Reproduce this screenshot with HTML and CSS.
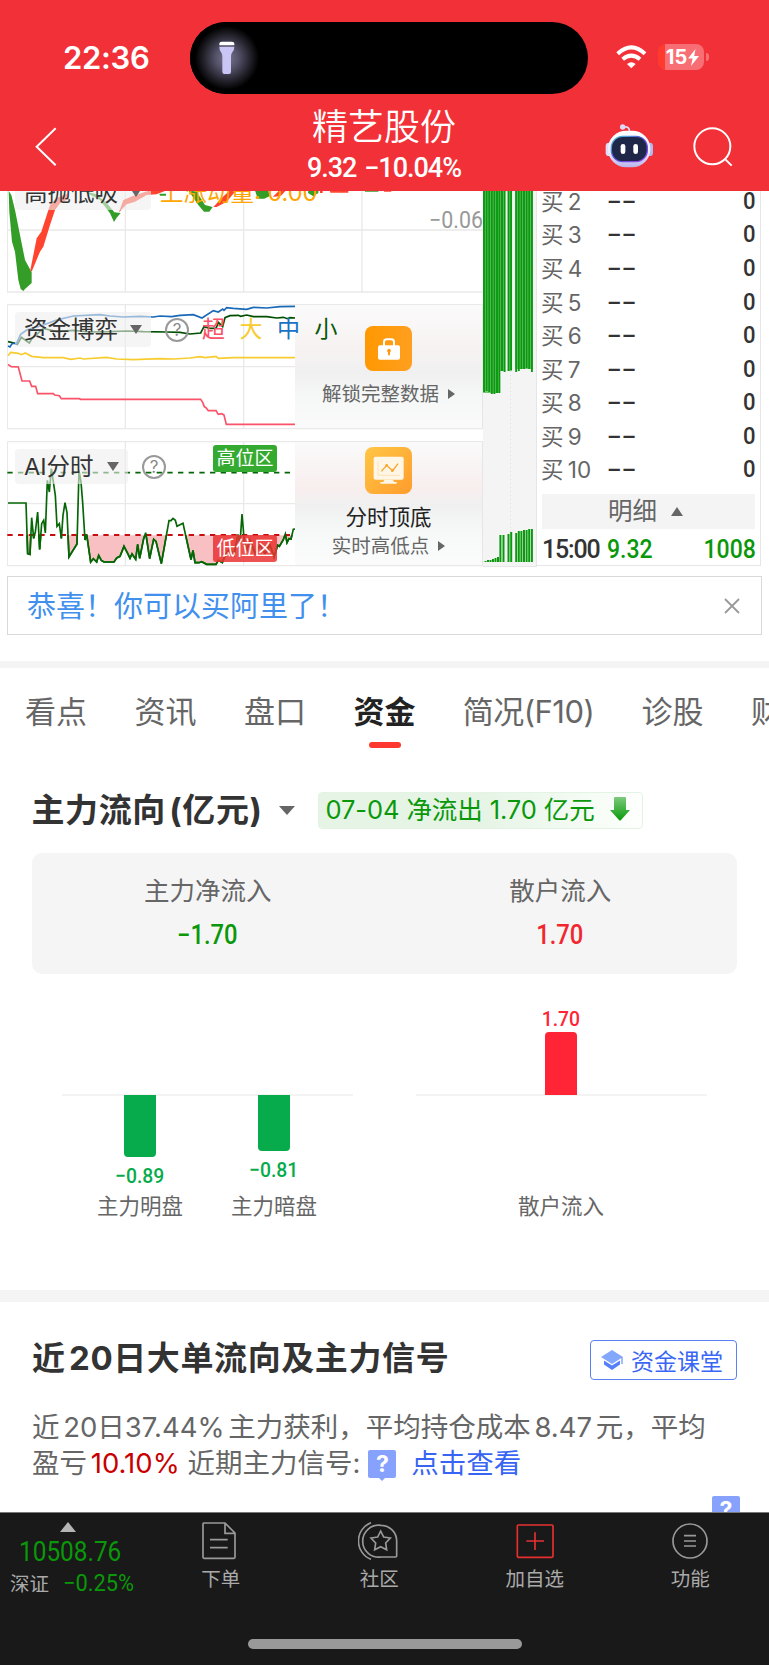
FILE: index.html
```html
<!DOCTYPE html>
<html lang="zh-CN">
<head>
    <meta charset="UTF-8">
    <meta name="viewport" content="width=device-width, initial-scale=1.0">
    <title>精艺股份</title>
    <link rel="stylesheet" href="styles.css">
</head>
<body>
    <header class="header">
        <div class="status-bar">
            <span class="clock">22:36</span>
            <div class="island">
                <div class="torch-glow">
                    <svg width="16" height="34" viewBox="656 124 48 102">
                        <path d="M657 137v-4q0-7 8-7h29q8 0 8 7v4z" fill="#fff"/>
                        <path d="M657 141h45q0 10-6 17q-4 5-4 12v46q0 7-6 7h-14q-6 0-6-7v-46q0-7-4-12q-5-7-5-17z" fill="#c9c6f6"/>
                    </svg>
                </div>
            </div>
            <div class="status-icons">
                <svg width="31" height="24" viewBox="708 136 93 72" fill="none" stroke="#fff" stroke-width="12">
                    <path d="M713 162q41-38 82 0"/>
                    <path d="M728 179q26-22 52 0"/>
                    <path d="M754 206l-13-13q13-11 26 0z" fill="#fff" stroke="none"/>
                </svg>
                <span class="battery">15<svg width="11" height="17" viewBox="0 0 11 17"><path d="M7.5 0L0 9.5h4.6L3 17L11 7H6.2z" fill="#fff"/></svg></span>
                <i class="battery-tip"></i>
            </div>
        </div>
        <div class="nav-bar">
            <svg class="back" width="22" height="40" viewBox="106 382 66 120" fill="none" stroke="#fff" stroke-width="6"><path d="M168 386l-57 55l57 56"/></svg>
            <div class="stock">
                <h1>精艺股份</h1>
                <p>9.32 −10.04%</p>
            </div>
            <svg class="robot" width="48" height="44" viewBox="675 373 144 132">
                <defs>
                    <linearGradient id="shell" x2="0" y2="1"><stop offset="0" stop-color="#fff"/><stop offset=".6" stop-color="#eceafd"/><stop offset="1" stop-color="#b9b4ec"/></linearGradient>
                    <linearGradient id="rim" x2="1" y2="1"><stop offset="0" stop-color="#4fd5e0"/><stop offset=".5" stop-color="#5546d8"/><stop offset="1" stop-color="#9b4df0"/></linearGradient>
                </defs>
                <path d="M732 382q18-2 16 14" fill="none" stroke="#dcdaf6" stroke-width="5"/>
                <circle cx="728" cy="382" r="8" fill="#dcdaf6"/>
                <rect x="677" y="429" width="20" height="40" rx="10" fill="#dedcf8"/>
                <rect x="799" y="429" width="20" height="40" rx="10" fill="#b5b8ee"/>
                <rect x="684" y="393" width="127" height="110" rx="54" fill="url(#shell)"/>
                <rect x="694" y="410" width="108" height="76" rx="34" fill="#1f2748" stroke="url(#rim)" stroke-width="4"/>
                <rect x="722" y="433" width="14" height="30" rx="7" fill="#fff"/>
                <rect x="760" y="433" width="14" height="30" rx="7" fill="#fff"/>
            </svg>
            <svg class="search" width="40" height="40" viewBox="939 381 120 120" fill="none" stroke="#fff" stroke-width="6"><circle cx="997" cy="439" r="54"/><path d="M1036 478l19 19"/></svg>
        </div>
    </header>

    <section class="market">
        <div class="charts">
            <div class="panel panel-momentum">
                <svg width="477" height="102" viewBox="21 18 1431 306">
                    <path class="grid" d="M22 0V321H1449M376 0V321M731 0V321M1086 0V321M22 135H1449"/>
                    <path fill="#339d27" d="M26 18L34 30L45 75L60 150L75 225L95 262V294L75 312L70 318L62 312L55 285L45 200L36 170L28 80z"/>
                    <path fill="#ff4530" d="M91 255L110 160L124 140L150 60L168 40L205 25V42L180 55L165 75L150 120L130 185L120 200L95 260z"/>
                    <path fill="#339d27" d="M250 18L290 28L325 60L343 82L362 84L350 98L342 111L330 85L300 45z"/>
                    <path fill="#ff4530" d="M357 82L370 45L400 32L450 16H500L470 28L440 30L405 50L380 58z"/>
                    <path fill="#339d27" d="M478 26h20v6h-18zM565 16L590 20L615 60L638 66L628 80L612 80L595 60z"/>
                    <path fill="#ff4530" d="M640 66L668 36L690 16L705 20L680 50L650 66z"/>
                    <path fill="#339d27" d="M765 16h40l3 18l-15 7h-20z"/>
                    <path fill="#ff4530" d="M818 36l20-20h20l-15 16zM960 18h8v6h-8zM990 18h55v5h-54zM1152 18h22v2h-22z"/>
                    <path fill="#339d27" d="M925 16h30v8l-15 10l-16-10zM1095 16h40v4h-40z"/>
                </svg>
                <div class="pill">高抛低吸<i class="caret"></i></div>
                <span class="momentum">上涨动量: 0.00</span>
                <span class="scale">−0.06</span>
            </div>

            <div class="panel panel-funds">
                <svg width="477" height="126" viewBox="21 357 1431 378" fill="none" stroke-width="5">
                    <path class="grid" d="M22 359H1449M22 731H1449M22 359V731M376 359V731M731 359V731M22 545H886"/>
                    <path stroke="#004f00" d="M24 470L42 474L52 478L64 457L88 474L95 462L130 430L170 440L220 436L270 441L330 440L380 438L430 440L500 441L540 442L570 447L602 444L612 425L630 430L648 430L655 412L668 425L675 398L690 392L715 391L722 394L740 390L760 395L800 395L830 399L850 397L862 401L870 398L886 399"/>
                    <path stroke="#1869b8" d="M24 483L30 486L36 476L50 474L62 448L80 435L130 420L170 405L220 393L300 389L330 393L370 396L420 394L460 396L480 393L515 395L540 391L580 389L606 399L640 377L655 381L668 372L672 376L680 368L700 370L740 373L760 367L800 369L840 365L886 364"/>
                    <path stroke="#f7cc2e" d="M24 512L32 502L55 505L64 509L76 504L95 514L130 518L190 518L212 523L240 519L250 522L320 517L350 522L400 524L480 521L520 522L570 519L600 515L615 518L648 514L655 520L700 518L886 518"/>
                    <path stroke="#fa5268" d="M24 538L34 545L55 546L66 588H89L95 604H107L113 626H160L164 630L178 632L184 641H238L242 643H602L608 652L613 665L618 668L625 677H648L655 688L665 686L672 690L679 718H886"/>
                </svg>
                <div class="pill">资金博弈<i class="caret"></i></div>
                <div class="help">?</div>
                <div class="locked">
                    <span class="lock-icon">
                        <svg width="24" height="22" viewBox="292 460 70 66"><path d="M312 487v-15q0-8 8-8h14q8 0 8 8v15" fill="none" stroke="#fff" stroke-width="6"/><rect x="294" y="482" width="66" height="43" rx="6" fill="#fff"/><path d="M327 492a6 6 0 0 1 3 11v9h-6v-9a6 6 0 0 1 3-11z" fill="#ff9a0e"/></svg>
                    </span>
                    <p class="unlock">解锁完整数据<i class="arrow"></i></p>
                </div>
                <div class="legend"><span class="c-red">超</span><span class="c-yellow">大</span><span class="c-blue">中</span><span class="c-green">小</span></div>
            </div>

            <div class="panel panel-ai">
                <svg width="477" height="126" viewBox="21 47 1431 378" fill="none" stroke-width="5">
                    <clipPath id="low"><rect x="21" y="330" width="866" height="92"/></clipPath>
                    <path class="grid" d="M22 49H1449M22 421H1449M22 49V421M376 49V421M731 49V421M22 235H886"/>
                    <g clip-path="url(#low)"><use href="#ai-line" fill="#f9c0c3"/></g>
                    <path stroke="#056605" stroke-dasharray="16 16" d="M22 142H886"/>
                    <path stroke="#c80d10" stroke-width="6" stroke-dasharray="16 16" d="M22 329H886"/>
                    <path id="ai-line" stroke="#056605" d="M24 233H78L83 385L90 387L95 277L101 339L106 320L113 260L119 372L125 295L131 285L136 323L142 165L148 200L154 130L166 210L171 303L178 295L184 339L189 270L195 232L201 262L207 395L213 385L231 356L237 136L243 170L248 232L255 344L260 327L272 410L280 400L290 410L296 390L304 405L312 410H342L350 398L360 393L372 363L383 384L390 399L396 386L407 402L413 357L419 399L431 340L437 322L449 400L455 370L461 342L468 348L484 415L507 286L513 286L519 279L526 285L531 303L549 294L573 403L579 375L585 412L597 412L605 409L620 417H648L655 405L667 412L678 385L690 370L702 390L714 327L720 355L726 266L733 350L740 375L750 345L766 385L780 360L795 385L810 360L822 395L833 360L838 363L850 343L856 326L861 352L867 340L873 341L880 312L886 311"/>
                </svg>
                <div class="pill pill-ai">AI分时<i class="caret"></i></div>
                <div class="help help-ai">?</div>
                <span class="zone zone-high">高位区</span>
                <span class="zone zone-low">低位区</span>
                <div class="locked">
                    <span class="lock-icon screen-icon">
                        <svg width="32" height="30" viewBox="280 97 96 90"><rect x="282" y="99" width="90" height="69" rx="6" fill="#fff6e6"/><path d="M314 168h26l3 7h8v5h-49v-5h9z" fill="#fff6e6"/><path d="M295 112v43h66" fill="none" stroke="#fbd9a0" stroke-width="2"/><path d="M305 143l16-18l18 16l16-21" fill="none" stroke="#f9a62c" stroke-width="4"/><circle cx="321" cy="125" r="4" fill="#f9a62c"/><circle cx="338" cy="141" r="4" fill="#f9a62c"/></svg>
                    </span>
                    <p class="lock-title">分时顶底</p>
                    <p class="lock-sub">实时高低点<i class="arrow"></i></p>
                </div>
            </div>
        </div>

        <div class="volume">
            <svg width="53" height="375" viewBox="0 0 53 375">
                <path d="M27.500 180V345" stroke="#ddd" stroke-dasharray="1 3"/>
                <path fill="#73c773" d="M0 0H22V180H17V202H0zM25 0h4v180h-4zM32 0H50V178H32z"/>
                <path stroke="#0a980f" stroke-width="1.900" d="M1 0V201M3.600 0V200M6.200 0V201M8.800 0V203M11.400 0V203M14 0V202M16.400 0V202M19 0V180M21.600 0V181M25.500 0V180M28.100 0V179M33.200 0V181M35.800 0V180M38.400 0V178M41 0V178M43.600 0V177M46.200 0V178M48.900 0V181"/>
                <path stroke="#0a980f" stroke-width="2" d="M2.500 371v-1M5 371v-2M7.500 371v-2M10 371v-3M12.500 371v-4M15 371v-5M17.400 371v-27M20.500 371v-27M25.500 371v-28M28.200 371v-30M33.200 371v-29M35.800 371v-31M38.400 371v-31M41 371v-32M43.600 371v-32M46.200 371v-33M48.900 371v-33"/>
            </svg>
        </div>

        <div class="book">
            <ul>
                <li><span>买 2</span><b>--</b><em>0</em></li>
                <li><span>买 3</span><b>--</b><em>0</em></li>
                <li><span>买 4</span><b>--</b><em>0</em></li>
                <li><span>买 5</span><b>--</b><em>0</em></li>
                <li><span>买 6</span><b>--</b><em>0</em></li>
                <li><span>买 7</span><b>--</b><em>0</em></li>
                <li><span>买 8</span><b>--</b><em>0</em></li>
                <li><span>买 9</span><b>--</b><em>0</em></li>
                <li><span>买 10</span><b>--</b><em>0</em></li>
            </ul>
            <div class="detail-toggle">明细<i class="caret-up"></i></div>
            <div class="trade"><span>15:00</span><b>9.32</b><em>1008</em></div>
        </div>
    </section>

    <div class="ad">
        <span>恭喜！你可以买阿里了！</span>
        <svg width="16" height="16" viewBox="0 0 16 16" stroke="#999" stroke-width="1.800"><path d="M1 1l14 14M15 1L1 15"/></svg>
    </div>

    <nav class="tabs">
        <span>看点</span>
        <span>资讯</span>
        <span>盘口</span>
        <span class="active">资金</span>
        <span class="f10">简况(F10)</span>
        <span>诊股</span>
        <span>财务</span>
    </nav>

    <section class="flow">
        <div class="flow-head">
            <h2>主力流向 (亿元)</h2>
            <i class="caret"></i>
            <div class="flow-tag">
                <span>07-04 净流出 1.70 亿元</span>
                <svg width="20" height="24" viewBox="0 0 20 24">
                    <defs><linearGradient id="down" x2="0" y2="1"><stop offset="0" stop-color="#7ccb7c"/><stop offset="1" stop-color="#0a9a0a"/></linearGradient></defs>
                    <path d="M5 0h10q1 0 1 1v12h4L11 23q-1 1-2 0L0 13h4V1q0-1 1-1z" fill="url(#down)"/>
                </svg>
            </div>
        </div>
        <div class="summary">
            <div><p>主力净流入</p><b class="down">−1.70</b></div>
            <div><p>散户流入</p><b class="up">1.70</b></div>
        </div>
        <div class="bar-charts">
            <div class="bar-chart two">
                <div class="bar-item"><i class="bar bar-down bar-89"></i><b>−0.89</b><p>主力明盘</p></div>
                <div class="bar-item"><i class="bar bar-down bar-81"></i><b>−0.81</b><p>主力暗盘</p></div>
            </div>
            <div class="bar-chart">
                <div class="bar-item item-up"><b>1.70</b><i class="bar bar-up"></i><p>散户流入</p></div>
            </div>
        </div>
    </section>

    <section class="signal">
        <div class="signal-head">
            <h2>近 20日大单流向及主力信号</h2>
            <a class="lesson">
                <svg width="22" height="20" viewBox="0 0 22 20"><path d="M11 0L22 7L11 14L0 7z" fill="#83a7fb"/><path d="M3 10.500L11 15.500L19 10.500V14.500L11 20L3 14.500z" fill="#5580fa"/><path d="M21 7v7" stroke="#83a7fb" stroke-width="1.500"/></svg>
                资金课堂
            </a>
        </div>
        <p class="signal-text">近 20日37.44% 主力获利，平均持仓成本 8.47 元，平均<br>盈亏 <b>10.10%</b> 近期主力信号:<i class="tip">?</i><a>点击查看</a></p>
        <i class="tip tip-next">?</i>
    </section>

    <footer class="footer">
        <div class="toolbar">
            <div class="index">
                <i class="caret-up"></i>
                <b>10508.76</b>
                <p>深证<em>−0.25%</em></p>
            </div>
            <div class="tool order">
                <svg width="34" height="38" viewBox="608 68 102 114" fill="none" stroke="#999" stroke-width="5"><path d="M611 73q0-2 2-2h64l30 30v73q0 3-3 3h-90q-3 0-3-3zM677 72v30h30M632 121h53M632 145h53"/></svg>
                <span>下单</span>
            </div>
            <div class="tool community">
                <svg width="40" height="38" viewBox="1072 68 120 114" fill="none" stroke="#999" stroke-width="5"><path d="M1111 70a59 59 0 0 0 0 110M1141 78a48 48 0 1 0 0 95h44q3 0 3-3v-45a47 47 0 0 0-47-47z"/><path d="M1140 95l9 18l20 3l-14 15l3 20l-18-9l-18 9l3-20l-14-15l20-3z"/></svg>
                <span>社区</span>
            </div>
            <div class="tool watch">
                <svg width="38" height="38" viewBox="409 68 114 114" fill="none" stroke="#e5302f" stroke-width="5"><rect x="413" y="77" width="107" height="97" rx="3"/><path d="M440 125h53M466 99v53"/></svg>
                <span>加自选</span>
            </div>
            <div class="tool more">
                <svg width="38" height="38" viewBox="870 68 114 114" fill="none" stroke="#999" stroke-width="5"><circle cx="927" cy="125" r="51"/><path d="M909 109h36M909 125h36M909 140h36"/></svg>
                <span>功能</span>
            </div>
        </div>
        <div class="home-bar"></div>
    </footer>
</body>
</html>
```

FILE: styles.css
```css
* {
    box-sizing: border-box;
}

body, h1, h2, p, ul {
    margin: 0;
    padding: 0;
}

body {
    width: 769px;
    height: 1665px;
    overflow: hidden;
    background: #fff;
    color: #333;
    font-family: "Inter", "Noto Sans CJK SC", sans-serif;
    display: flex;
    flex-direction: column;
}

svg {
    display: block;
    flex: none;
}

i, em {
    font-style: normal;
}

.up {
    color: #f2272e;
}

.down {
    color: #0a980a;
}

.caret {
    width: 0;
    height: 0;
    border: 6.5px solid transparent;
    border-top: 9px solid #666;
    border-bottom: 0;
}

.caret-up {
    width: 0;
    height: 0;
    border: 6.5px solid transparent;
    border-bottom: 9px solid #666;
    border-top: 0;
}

.arrow {
    width: 0;
    height: 0;
    border: 5.5px solid transparent;
    border-left: 7px solid #666;
    border-right: 0;
}

/* header */
.header {
    flex: none;
    height: 191px;
    background: #f23038;
    color: #fff;
}

.status-bar {
    display: flex;
    height: 104px;
    padding-top: 22px;
}

.clock {
    width: 190px;
    padding-left: 63px;
    font-size: 31px;
    font-weight: 600;
    line-height: 71px;
    letter-spacing: -0.3px;
}

.island {
    width: 398px;
    height: 72px;
    border-radius: 36px;
    background: #000;
}

.torch-glow {
    display: flex;
    align-items: center;
    justify-content: center;
    width: 74px;
    height: 72px;
    border-radius: 36px;
    background: radial-gradient(circle 32px, #77748c 0, #55536a 35%, #24232c 72%, #000 100%);
}

.status-icons {
    display: flex;
    align-items: center;
    height: 70px;
    padding-left: 28px;
}

.battery {
    display: flex;
    align-items: center;
    justify-content: center;
    gap: 1px;
    width: 46px;
    height: 26px;
    margin-left: 11px;
    padding-left: 3px;
    border-radius: 8px;
    background: linear-gradient(90deg, #ff3b30 7px, #f76f74 7px);
    font-size: 20px;
    font-weight: 700;
}

.battery-tip {
    width: 3px;
    height: 8px;
    margin-left: 2px;
    border-radius: 0 4px 4px 0;
    background: #f76f74;
}

.nav-bar {
    display: flex;
    align-items: flex-start;
}

.back {
    margin: 23px 0 0 35px;
}

.stock {
    width: 300px;
    margin-left: 177px;
    text-align: center;
}

.stock h1 {
    height: 46px;
    font-size: 36px;
    font-weight: 350;
    line-height: 46px;
}

.stock p {
    font-family: "Roboto", sans-serif;
    font-size: 27px;
    font-weight: 500;
    line-height: 36px;
    letter-spacing: -1px;
    word-spacing: 2px;
}

.robot {
    margin: 20px 0 0 71px;
}

.search {
    margin: 23px 0 0 40px;
}

/* charts and order book */
.market {
    flex: none;
    display: flex;
    height: 376px;
    padding-left: 7px;
    overflow: hidden;
}

.charts {
    display: flex;
    flex-direction: column;
    width: 476px;
}

.panel {
    position: relative;
    flex: none;
    height: 126px;
    margin-bottom: 11px;
    overflow: hidden;
}

.panel-momentum {
    height: 102px;
}

.grid {
    fill: none;
    stroke: #e9e9e9;
    stroke-width: 4;
}

.pill {
    position: absolute;
    left: 8px;
    top: 8px;
    display: flex;
    align-items: center;
    justify-content: space-between;
    width: 136px;
    height: 35px;
    padding: 0 9px 0 9px;
    border-radius: 4px;
    background: rgba(238, 238, 238, 0.6);
    font-size: 23.5px;
    line-height: 35px;
}

.pill-ai {
    width: 113px;
}

.panel-momentum .pill {
    top: -16px;
}

.momentum {
    position: absolute;
    left: 153px;
    top: -16px;
    color: #ffa500;
    font-size: 23.5px;
    line-height: 35px;
}

.scale {
    position: absolute;
    right: 0;
    top: 15px;
    color: #999;
    font-family: "Roboto", sans-serif;
    font-size: 23px;
    line-height: 30px;
    transform: scaleX(0.93);
    transform-origin: right;
}

.help {
    position: absolute;
    left: 158px;
    top: 14px;
    width: 24px;
    height: 24px;
    border: 2px solid #999;
    border-radius: 50%;
    color: #888;
    font-size: 17px;
    line-height: 20px;
    text-align: center;
}

.help-ai {
    left: 135px;
}

.legend {
    position: absolute;
    left: 195px;
    top: 8px;
    display: flex;
    gap: 14.5px;
    font-size: 23px;
    line-height: 35px;
}

.c-red { color: #fa5268; }
.c-yellow { color: #f7cc2e; }
.c-blue { color: #1a72c4; }
.c-green { color: #0a560a; }

.locked {
    position: absolute;
    left: 288px;
    top: 1px;
    display: flex;
    flex-direction: column;
    align-items: center;
    width: 188px;
    height: 123px;
    border-right: 1px solid #e6e6e6;
    background: linear-gradient(#fafafa, #f7f2f2 35%, #f0f0f0 55%, #f6f7f7 75%, #fafafa);
    color: #666;
}

.panel-ai .locked {
    background: linear-gradient(#fafafa, #f8eeee 38%, #f0f0f0 52%, #f7f9f9 75%, #fbfbfb);
}

.lock-icon {
    display: flex;
    align-items: center;
    justify-content: center;
    width: 47px;
    height: 45px;
    margin-top: 21px;
    border-radius: 8px;
    background: linear-gradient(90deg, #ff9800, #ff9f20);
}

.screen-icon {
    height: 47px;
    margin-top: 5px;
    background: linear-gradient(135deg, #ffc645, #ff9c2c);
}

.unlock, .lock-sub {
    display: flex;
    align-items: center;
    gap: 9px;
    font-size: 19.5px;
    line-height: 28px;
}

.unlock {
    margin-top: 9px;
}

.lock-title {
    margin-top: 7px;
    color: #222;
    font-size: 21.5px;
    line-height: 32px;
}

.lock-sub {
    line-height: 26px;
}

.zone {
    position: absolute;
    left: 206px;
    width: 64px;
    height: 27px;
    border-radius: 3px;
    color: #fff;
    font-size: 19px;
    line-height: 27px;
    text-align: center;
}

.zone-high {
    top: 4px;
    background: #35aa31;
}

.zone-low {
    top: 94px;
    background: rgba(235, 50, 50, 0.85);
}

.volume {
    width: 54px;
    border-right: 1px solid #e6e6e6;
    border-bottom: 1px solid #e6e6e6;
    background: #f4f4f4;
}

.book {
    width: 224px;
    height: 375px;
    padding: 0 4px 0 5px;
    border-right: 1px solid #e6e6e6;
    border-bottom: 1px solid #e6e6e6;
}

.book ul {
    margin-top: -6.1px;
    list-style: none;
}

.book li, .trade {
    display: flex;
    height: 33.55px;
    font-family: "Roboto", sans-serif;
    font-size: 24px;
    font-weight: 500;
    line-height: 33.55px;
}

.book li span {
    width: 66px;
    margin-left: -1px;
    color: #666;
    font-family: "Inter", "Noto Sans CJK SC", sans-serif;
    font-size: 22.5px;
    font-weight: 400;
    word-spacing: -2px;
}

.book li b {
    font-weight: 500;
    transform: scaleX(1.8);
    transform-origin: left;
}

.book em {
    margin-left: auto;
    transform: scaleX(0.92);
    transform-origin: right;
}

.detail-toggle {
    display: flex;
    align-items: center;
    justify-content: center;
    gap: 14px;
    width: 213px;
    height: 35px;
    margin-top: 7.3px;
    padding-right: 6px;
    background: #f4f4f4;
    color: #666;
    font-size: 24.5px;
    line-height: 35px;
}

.trade {
    height: 36px;
    font-size: 25px;
    line-height: 42px;
}

.trade span {
    width: 65px;
    letter-spacing: -1.2px;
}

.trade b, .trade em {
    color: #0a980a;
    font-weight: 500;
    transform: scaleX(0.92);
}

.trade b {
    transform-origin: left;
}

.ad {
    flex: none;
    display: flex;
    align-items: center;
    justify-content: space-between;
    width: 755px;
    height: 59px;
    margin: 9px 0 0 7px;
    padding: 0 21px 0 19px;
    border: 1px solid #d9d9d9;
    color: #4290ee;
    font-size: 29px;
}

.ad span {
    margin-top: -4px;
}

/* tabs */
.tabs {
    flex: none;
    display: flex;
    gap: 47.5px;
    height: 96px;
    margin-top: 26px;
    padding: 22px 0 0 25px;
    border-top: 7px solid #f4f4f4;
    color: #666;
    font-size: 31px;
    line-height: 44px;
    white-space: nowrap;
}

.tabs span {
    display: flex;
    flex: none;
    flex-direction: column;
    align-items: center;
}

.tabs .f10 {
    width: 131px;
    letter-spacing: -0.5px;
}

.tabs .active {
    color: #222;
    font-weight: 700;
}

.tabs .active::after {
    content: "";
    width: 32px;
    height: 6px;
    margin-top: 8px;
    border-radius: 3px;
    background: #fe372f;
}

/* capital flow */
.flow {
    flex: none;
    height: 533px;
    padding: 34px 32.5px 0 31.5px;
}

.flow-head {
    display: flex;
    align-items: center;
    height: 38px;
}

h2 {
    font-size: 33px;
    font-weight: 700;
    line-height: 38px;
    letter-spacing: 0.6px;
    word-spacing: -5px;
    white-space: nowrap;
}

.flow-head h2 {
    width: 247px;
}

.flow-head .caret {
    border-width: 9px 8px 0;
}

.flow-tag {
    display: flex;
    align-items: center;
    justify-content: space-between;
    width: 325px;
    height: 37px;
    margin-left: 23px;
    padding: 0 12px 2px 7px;
    border: 1px solid #e4f4e4;
    border-radius: 4px;
    background: linear-gradient(90deg, #e5f4e5 50%, #fdfffd);
    color: #0a980a;
    font-size: 25.5px;
    line-height: 33px;
    letter-spacing: -0.1px;
    white-space: nowrap;
}

.summary {
    display: flex;
    height: 121px;
    margin-top: 24px;
    padding-top: 19px;
    border-radius: 10px;
    background: #f5f5f5;
    text-align: center;
}

.summary div {
    flex: 1;
}

.summary p {
    color: #666;
    font-size: 25.5px;
    line-height: 38px;
}

.summary b {
    display: inline-block;
    font-family: "Roboto", sans-serif;
    font-size: 27px;
    font-weight: 500;
    line-height: 50px;
    transform: scaleX(0.88);
}

.bar-charts {
    display: flex;
    gap: 63px;
    padding: 120px 30px 0;
}

.bar-chart {
    display: flex;
    justify-content: center;
    width: 291px;
    height: 122px;
    border-top: 2px solid #f3f3f3;
}

.two {
    gap: 48px;
}

.bar-item {
    display: flex;
    flex-direction: column;
    align-items: center;
    width: 86px;
    margin-top: -1px;
    white-space: nowrap;
}

.bar {
    width: 32px;
}

.bar-down {
    border-radius: 0 0 4px 4px;
    background: #07ab4b;
}

.bar-89 {
    height: 62px;
}

.bar-81 {
    height: 56px;
}

.bar-up {
    height: 63px;
    border-radius: 4px 4px 0 0;
    background: #ff2436;
}

.bar-item b {
    margin-top: 6px;
    color: #07ab4b;
    font-family: "Roboto", sans-serif;
    font-size: 21px;
    font-weight: 500;
    line-height: 26px;
    transform: scaleX(0.92);
}

.bar-item p {
    margin-top: auto;
    color: #666;
    font-size: 21.5px;
    line-height: 20px;
}

.bar-item.item-up {
    margin-top: -90px;
}

.item-up b {
    margin-top: 0;
    color: #ff2436;
}

/* big order signal */
.signal {
    flex: none;
    height: 222px;
    padding: 36px 32px 0 32px;
    border-top: 12px solid #f4f4f4;
    overflow: hidden;
}

.signal-head {
    display: flex;
    align-items: center;
    justify-content: space-between;
    height: 44px;
}

.signal-head h2 {
    margin-top: -4px;
}

.lesson {
    display: flex;
    align-items: center;
    gap: 8px;
    width: 147px;
    height: 40px;
    padding-left: 10px;
    border: 1.5px solid #5c80f5;
    border-radius: 4px;
    color: #3a66f5;
    font-size: 23px;
    white-space: nowrap;
}

.signal-text {
    margin-top: 28px;
    color: #666;
    font-size: 27.5px;
    line-height: 35.5px;
    word-spacing: -4px;
    white-space: nowrap;
}

.signal-text b {
    margin-right: 4px;
    color: #c80000;
    font-weight: 400;
}

.signal-text a {
    margin-left: 15px;
    color: #3864f4;
}

.tip {
    display: inline-block;
    width: 28px;
    height: 28px;
    border-radius: 2px;
    background: #87a2fd;
    color: #fff;
    font-size: 23px;
    font-weight: 700;
    line-height: 28px;
    text-align: center;
    vertical-align: 1px;
}

.signal-text .tip {
    margin-left: 8px;
}

.signal-text .tip::after {
    content: "";
    display: block;
    width: 0;
    margin: -1px auto 0;
    border: 4px solid transparent;
    border-top-color: #87a2fd;
    border-bottom: 0;
}

.tip-next {
    display: block;
    margin: 15px 0 0 680px;
}

/* bottom toolbar */
.footer {
    flex: none;
    height: 153px;
    border-top: 1px solid #777;
    background: #191919;
    color: #aaa;
}

.toolbar {
    display: flex;
    height: 126px;
}

.index {
    display: flex;
    flex-direction: column;
    align-items: flex-start;
    width: 143px;
    padding: 9px 0 0 10px;
}

.index .caret-up {
    margin-left: 50px;
    border-width: 0 8.5px 10px;
    border-bottom-color: #b5b5b5;
}

.index b {
    margin-left: 9px;
    color: #0a980a;
    font-family: "Roboto", sans-serif;
    font-size: 28px;
    font-weight: 400;
    line-height: 39px;
    transform: scaleX(0.87);
    transform-origin: left;
}

.index p {
    display: flex;
    align-items: center;
    gap: 14px;
    font-size: 19.5px;
    line-height: 26px;
    white-space: nowrap;
}

.index em {
    color: #0a980a;
    font-family: "Roboto", sans-serif;
    font-size: 23px;
    transform: scaleX(0.95);
    transform-origin: left;
}

.tool {
    display: flex;
    flex-direction: column;
    align-items: center;
    width: 155.5px;
    padding-top: 9px;
    font-size: 19.5px;
    line-height: 38px;
}

.order svg {
    margin-right: 4px;
}

.community {
    margin-left: 3px;
}

.community svg {
    margin-right: 3px;
}

.home-bar {
    width: 274px;
    height: 10px;
    margin-left: 247.5px;
    border-radius: 5px;
    background: #999;
}
```
